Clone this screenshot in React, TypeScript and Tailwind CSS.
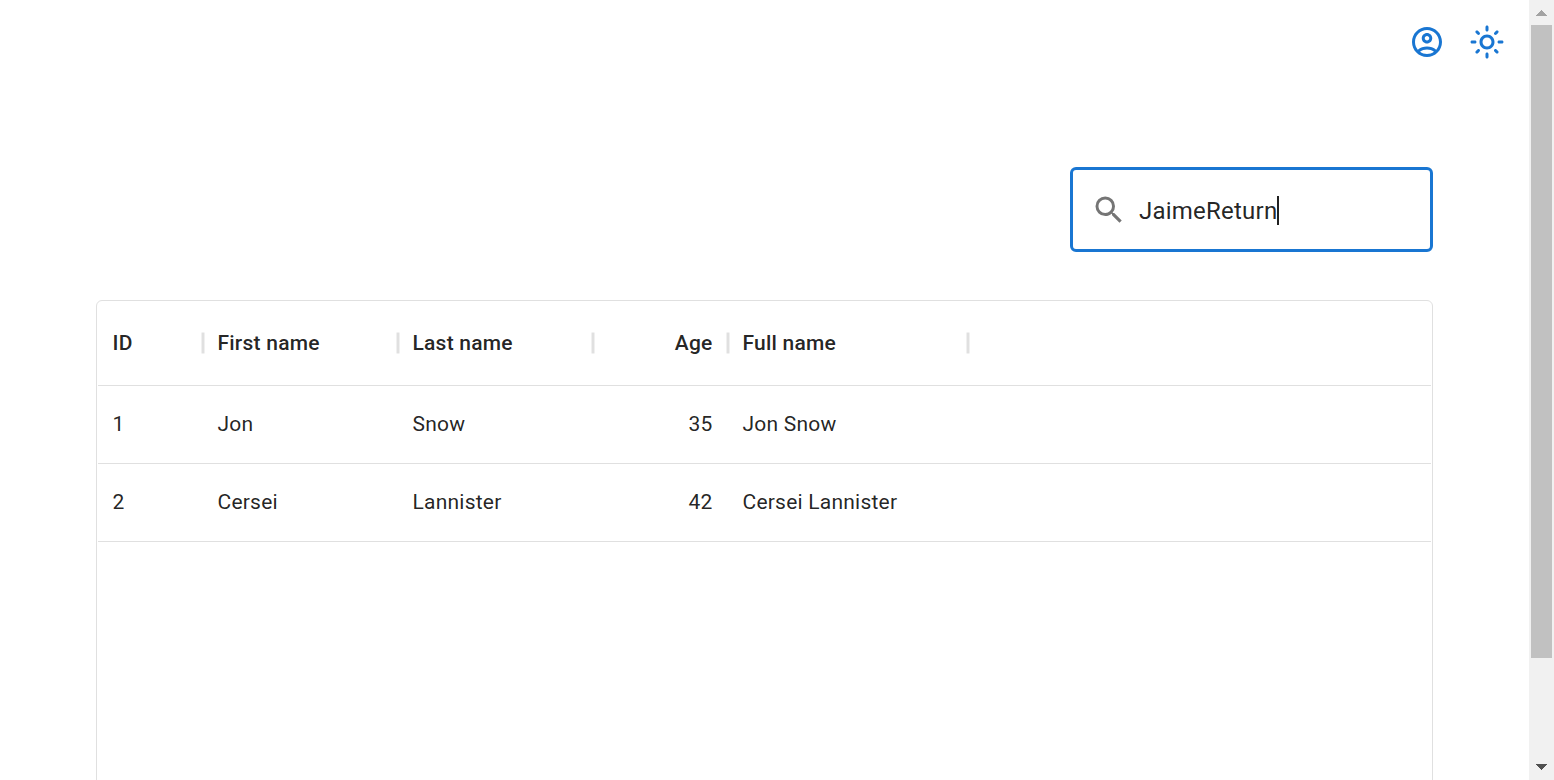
import type { ReactNode } from "react";
import { MdSearch } from "react-icons/md";

const rows = [
  { id: 1, first: "Jon", last: "Snow", age: 35 },
  { id: 2, first: "Cersei", last: "Lannister", age: 42 },
];

const grid = "grid grid-cols-[105px_195px_195px_135px_240px_1fr] items-center";
const cell = "pl-[14.5px] pr-[15.5px]";

function AccountIcon() {
  return (
    <svg className="size-9" viewBox="0 0 24 24" fill="currentColor">
      <path d="M12 2C6.48 2 2 6.48 2 12s4.48 10 10 10 10-4.48 10-10S17.52 2 12 2M7.35 18.5C8.66 17.56 10.26 17 12 17s3.34.56 4.65 1.5c-1.31.94-2.91 1.5-4.65 1.5s-3.34-.56-4.65-1.5m10.79-1.38C16.45 15.8 14.32 15 12 15s-4.45.8-6.14 2.12C4.7 15.73 4 13.95 4 12c0-4.42 3.58-8 8-8s8 3.58 8 8c0 1.95-.7 3.73-1.86 5.12" />
      <path d="M12 6c-1.93 0-3.5 1.57-3.5 3.5S10.07 13 12 13s3.5-1.57 3.5-3.5S13.93 6 12 6m0 5c-.83 0-1.5-.67-1.5-1.5S11.17 8 12 8s1.5.67 1.5 1.5S12.83 11 12 11" />
    </svg>
  );
}

function SunIcon() {
  return (
    <svg className="size-9" viewBox="0 0 24 24" fill="currentColor">
      <path d="M12 9c1.65 0 3 1.35 3 3s-1.35 3-3 3-3-1.35-3-3 1.35-3 3-3m0-2c-2.76 0-5 2.24-5 5s2.24 5 5 5 5-2.24 5-5-2.24-5-5-5M2 13h2c.55 0 1-.45 1-1s-.45-1-1-1H2c-.55 0-1 .45-1 1s.45 1 1 1m18 0h2c.55 0 1-.45 1-1s-.45-1-1-1h-2c-.55 0-1 .45-1 1s.45 1 1 1M11 2v2c0 .55.45 1 1 1s1-.45 1-1V2c0-.55-.45-1-1-1s-1 .45-1 1m0 18v2c0 .55.45 1 1 1s1-.45 1-1v-2c0-.55-.45-1-1-1s-1 .45-1 1M5.99 4.58c-.39-.39-1.03-.39-1.41 0-.39.39-.39 1.03 0 1.41l1.06 1.06c.39.39 1.03.39 1.41 0s.39-1.03 0-1.41zm12.37 12.37c-.39-.39-1.03-.39-1.41 0-.39.39-.39 1.03 0 1.41l1.06 1.06c.39.39 1.03.39 1.41 0 .39-.39.39-1.03 0-1.41zm1.06-10.96c.39-.39.39-1.03 0-1.41-.39-.39-1.03-.39-1.41 0l-1.06 1.06c-.39.39-.39 1.03 0 1.41s1.03.39 1.41 0zM7.05 18.36c.39-.39.39-1.03 0-1.41-.39-.39-1.03-.39-1.41 0l-1.06 1.06c-.39.39-.39 1.03 0 1.41s1.03.39 1.41 0z" />
    </svg>
  );
}

function HeaderCell({ children, right = false }: { children: ReactNode; right?: boolean }) {
  return (
    <div className={"relative font-medium " + cell + (right ? " text-right" : " text-left")}>
      {children}
      <svg
        className="absolute top-1/2 right-[-17.5px] size-9 -translate-y-1/2 text-[#e0e0e0]"
        viewBox="0 0 24 24"
        fill="currentColor"
      >
        <path d="M11 19V5h2v14z" />
      </svg>
    </div>
  );
}

function Scrollbar() {
  return (
    <div className="flex w-[25px] flex-col items-center bg-[#f1f1f1]">
      <svg className="h-[25px] w-[25px] shrink-0" viewBox="0 0 25 25" shapeRendering="crispEdges">
        <path d="M7 16h11v-1L12.5 10 7 15z" fill="#a3a3a3" />
      </svg>
      <div className="h-[633px] w-[21px] bg-[#c1c1c1]" />
      <div className="flex-1" />
      <svg className="h-[25px] w-[25px] shrink-0" viewBox="0 0 25 25" shapeRendering="crispEdges">
        <path d="M7 9h11v1L12.5 15 7 10z" fill="#505050" />
      </svg>
    </div>
  );
}

export default function App() {
  return (
    <div className="flex h-[780px] w-[1554px] overflow-hidden bg-white font-['Roboto',sans-serif] text-[rgba(0,0,0,0.87)]">
      <main className="flex flex-1 flex-col overflow-hidden">
        <header className="flex shrink-0 justify-end gap-6 pt-6 pr-6 text-[#1976d2]">
          <AccountIcon />
          <SunIcon />
        </header>

        <div className="mt-[107px] flex shrink-0 justify-end pr-24">
          <label className="flex h-[85px] w-[363px] items-center rounded-[6px] border-[3px] border-[#1976d2] pt-0.5 pl-[18px]">
            <MdSearch className="mb-0.5 size-9 shrink-0 text-[rgba(0,0,0,0.54)]" />
            <span className="ml-3 text-[24px] leading-[34px] tracking-[0.225px]">JaimeReturn</span>
            <span className="h-[29px] w-0.5 bg-[#212121]" />
          </label>
        </div>

        <section className="mt-12 ml-24 h-[560px] w-[1337px] shrink-0 rounded-[6px] border border-[#e0e0e0] px-px text-[21px] leading-[30px] tracking-[0.225px]">
          <div className={grid + " h-[85px] border-b border-[#e0e0e0]"}>
            <HeaderCell>ID</HeaderCell>
            <HeaderCell>First name</HeaderCell>
            <HeaderCell>Last name</HeaderCell>
            <HeaderCell right>Age</HeaderCell>
            <HeaderCell>Full name</HeaderCell>
          </div>
          {rows.map((r) => (
            <div key={r.id} className={grid + " h-[78px] border-b border-[#e0e0e0] pb-0.5"}>
              <div className={cell}>{r.id}</div>
              <div className={cell}>{r.first}</div>
              <div className={cell}>{r.last}</div>
              <div className={cell + " text-right"}>{r.age}</div>
              <div className={cell}>{r.first + " " + r.last}</div>
            </div>
          ))}
        </section>
      </main>
      <Scrollbar />
    </div>
  );
}
